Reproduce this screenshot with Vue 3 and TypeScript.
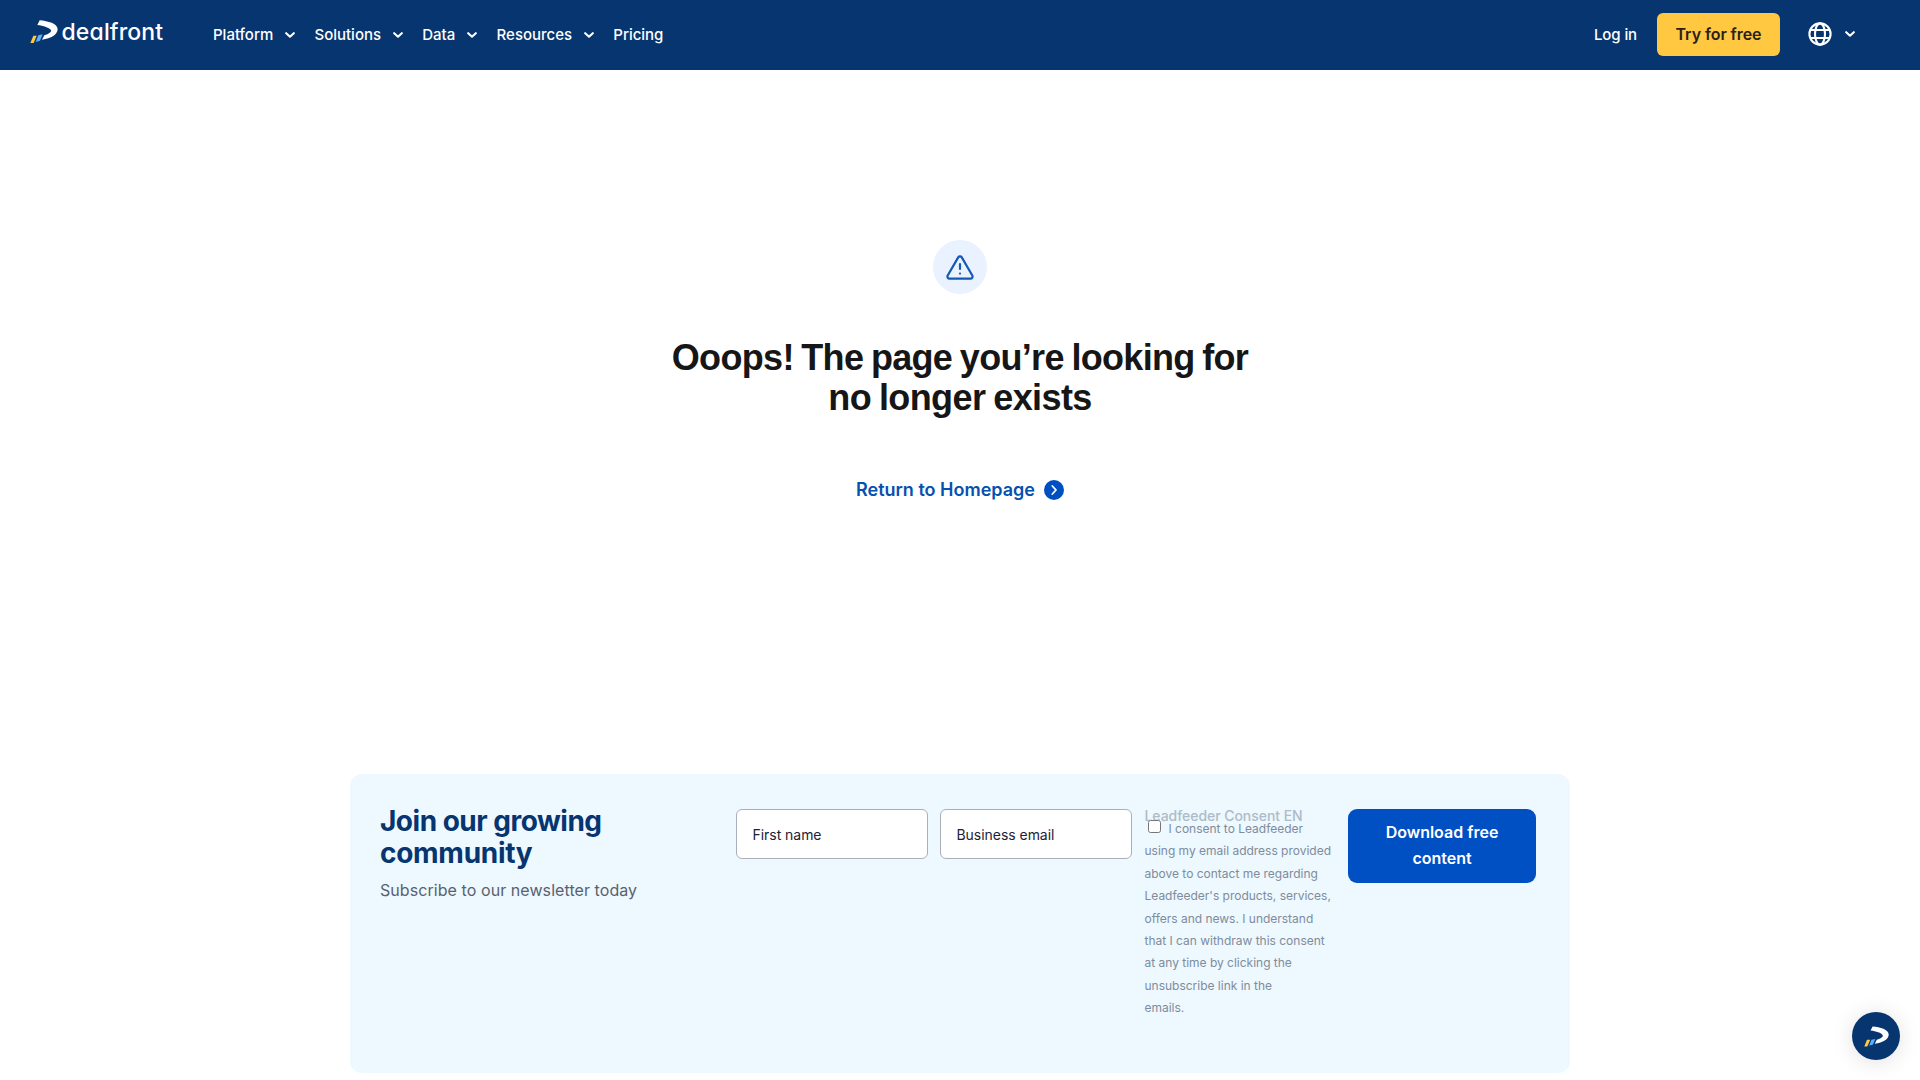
<script setup lang="ts">
interface NavItem {
  label: string
  menu: boolean
}

const navItems: NavItem[] = [
  { label: 'Platform', menu: true },
  { label: 'Solutions', menu: true },
  { label: 'Data', menu: true },
  { label: 'Resources', menu: true },
  { label: 'Pricing', menu: false },
]

const consentLines: string[] = [
  'using my email address provided',
  'above to contact me regarding',
  "Leadfeeder's products, services,",
  'offers and news. I understand',
  'that I can withdraw this consent',
  'at any time by clicking the',
  'unsubscribe link in the',
  'emails.',
]
</script>

<template>
  <div class="page">
    <header class="topbar">
      <a class="brand">
        <svg class="mark" viewBox="0 0 84 70">
          <path fill="#fff" d="M29 1C54 3 83 11 83 28C83 43 64 56 36 59L43 46C57 42 65 36 63 31C59 23 40 17 22 15Z" />
          <path fill="#ffc940" d="M10 47H20L11 69H1Z" />
          <path fill="#59b0ff" d="M25 46L38 43L30 62L17 66Z" />
        </svg>
        <span class="wordmark">dealfront</span>
      </a>
      <nav class="nav">
        <a v-for="item in navItems" :key="item.label" class="nav-item">
          <span>{{ item.label }}</span>
          <svg v-if="item.menu" class="chevron" viewBox="0 0 10 6">
            <path d="M1.2 1.2L5 4.7L8.8 1.2" />
          </svg>
        </a>
      </nav>
      <div class="actions">
        <a class="login">Log in</a>
        <button class="try">Try for free</button>
        <svg class="globe" viewBox="0 0 24 24">
          <circle cx="12" cy="12" r="10.6" />
          <ellipse cx="12" cy="12" rx="5" ry="10.6" />
          <path d="M2.4 8H21.6M2.4 16H21.6" />
        </svg>
        <svg class="chevron" viewBox="0 0 10 6">
          <path d="M1.2 1.2L5 4.7L8.8 1.2" />
        </svg>
      </div>
    </header>

    <main class="missing">
      <div class="alert">
        <svg viewBox="0 0 28 26">
          <path d="M12.2 2.4L1.7 20.4C.9 22 1.9 23.7 3.6 23.7H24.4C26.1 23.7 27.1 22 26.3 20.4L15.8 2.4C15 1.1 13 1.1 12.2 2.4Z" />
          <path d="M14 9V14" />
          <circle cx="14" cy="18.6" r="1.1" />
        </svg>
      </div>
      <h1><span class="l1">Ooops! The page you’re looking for</span><br><span class="l2">no longer exists</span></h1>
      <a class="home">
        <span>Return to Homepage</span>
        <svg viewBox="0 0 20 20">
          <circle cx="10" cy="10" r="10" />
          <path d="M8.3 6L12 10L8.3 14" />
        </svg>
      </a>
    </main>

    <section class="newsletter">
      <div class="intro">
        <h2>Join our growing<br><span>community</span></h2>
        <p>Subscribe to our newsletter today</p>
      </div>
      <form class="form" @submit.prevent>
        <input class="field" type="text" placeholder="First name">
        <input class="field" type="text" placeholder="Business email">
        <div class="consent">
          <div class="consent-title">Leadfeeder Consent EN</div>
          <label class="consent-text">
            <input type="checkbox">I consent to Leadfeeder<br>
            <template v-for="line in consentLines" :key="line">{{ line }}<br></template>
          </label>
        </div>
        <button class="download">Download free<br>content</button>
      </form>
    </section>

    <button class="chat" aria-label="Open chat">
      <svg viewBox="0 0 84 70">
        <path fill="#fff" d="M29 1C54 3 83 11 83 28C83 43 64 56 36 59L43 46C57 42 65 36 63 31C59 23 40 17 22 15Z" />
        <path fill="#ffc940" d="M10 46H21L11 69H1Z" />
        <path fill="#59b0ff" d="M25 46L38 43L30 62L17 66Z" />
      </svg>
    </button>
  </div>
</template>

<style>
body {
  margin: 0;
  overflow: hidden;
}
</style>

<style scoped>
.page {
  box-sizing: border-box;
  width: 100%;
  height: 1080px;
  background: #fff;
  color: #161616;
  font-family: Inter, "Liberation Sans", sans-serif;
  overflow: hidden;
}
button {
  border: 0;
  padding: 0;
  font-family: inherit;
}
.topbar {
  box-sizing: border-box;
  display: flex;
  align-items: center;
  height: 70px;
  padding: 0 65px 0 30px;
  background: #07356f;
  color: #fff;
}
.brand {
  display: flex;
  align-items: center;
  width: 183px;
}
.mark {
  width: 28px;
  height: 23.3px;
  margin-top: -7px;
}
.wordmark {
  margin: -6px 0 0 3.5px;
  font-size: 23px;
  font-weight: 500;
  line-height: 28px;
  letter-spacing: 0.15px;
  font-feature-settings: "cv11";
}
.nav {
  display: flex;
  gap: 19.4px;
}
.nav-item {
  display: flex;
  align-items: center;
  font-size: 15px;
  font-weight: 450;
  line-height: 20px;
  letter-spacing: -0.01px;
}
.nav-item .chevron {
  margin-left: 11.9px;
}
.chevron {
  width: 10px;
  height: 6px;
  fill: none;
  stroke: #fff;
  stroke-width: 2.1;
  stroke-linecap: round;
  stroke-linejoin: round;
}
.actions {
  display: flex;
  align-items: center;
  margin-left: auto;
}
.login {
  margin: -2px 20px 0 0;
  font-size: 15px;
  font-weight: 450;
  letter-spacing: -0.1px;
}
.try {
  width: 123px;
  height: 43px;
  margin-top: -1px;
  padding-bottom: 2px;
  border-radius: 6px;
  background: #ffc840;
  color: #2b2118;
  font-size: 16px;
  font-weight: 600;
  letter-spacing: -0.07px;
}
.globe {
  width: 24px;
  height: 24px;
  margin: -2px 13px 0 28px;
  fill: none;
  stroke: #fff;
  stroke-width: 2.1;
}
.actions .chevron {
  margin-top: -3px;
}
.missing {
  display: flex;
  flex-direction: column;
  align-items: center;
  height: 704px;
}
.alert {
  display: flex;
  align-items: center;
  justify-content: center;
  width: 54px;
  height: 54px;
  margin-top: 170px;
  border-radius: 50%;
  background: #ebf2ff;
}
.alert svg {
  width: 28px;
  height: 26px;
  margin-top: 1px;
  fill: none;
  stroke: #1259b8;
  stroke-width: 2.2;
  stroke-linecap: round;
}
.alert circle {
  fill: #1259b8;
  stroke: none;
}
h1 {
  margin: 44px 0 0;
  font: 700 36px/40px "Liberation Sans", sans-serif;
  text-align: center;
}
.l1 {
  letter-spacing: -0.68px;
  word-spacing: -1.7px;
}
.l2 {
  letter-spacing: -0.6px;
  word-spacing: -1.5px;
}
.home {
  display: flex;
  align-items: center;
  gap: 9px;
  margin-top: 59px;
  color: #0650b0;
  font-size: 18px;
  font-weight: 600;
  line-height: 26px;
}
.home svg {
  width: 20px;
  height: 20px;
  fill: #004fc0;
}
.home path {
  fill: none;
  stroke: #fff;
  stroke-width: 1.8;
  stroke-linecap: round;
  stroke-linejoin: round;
}
.newsletter {
  box-sizing: border-box;
  display: flex;
  width: 1220px;
  height: 299px;
  margin: 0 auto;
  padding: 35px 34px 0 30px;
  border-radius: 12px;
  background: #edf8ff;
}
.intro {
  width: 356px;
  margin-top: -4px;
  flex: none;
}
h2 {
  margin: 0;
  color: #07356f;
  font-size: 28px;
  font-weight: 700;
  line-height: 32px;
  letter-spacing: -0.5px;
}
h2 span {
  letter-spacing: -0.28px;
}
.intro p {
  margin: 9px 0 0;
  color: #58626e;
  font-size: 16px;
  line-height: 24px;
  letter-spacing: 0.07px;
}
.form {
  display: flex;
  align-items: flex-start;
  gap: 12px;
}
.field {
  box-sizing: border-box;
  width: 192px;
  height: 50px;
  padding: 1px 15.5px;
  border: 1px solid #a9afbb;
  border-radius: 6px;
  background: #fff;
  font: 400 14px Inter, sans-serif;
  letter-spacing: -0.04px;
}
.field::placeholder {
  color: #1c2237;
  opacity: 1;
}
.consent {
  width: 192px;
}
.consent-title {
  height: 9px;
  margin-left: 0.5px;
  color: #aebbc8;
  font-size: 14px;
  font-weight: 500;
  line-height: 14px;
  letter-spacing: -0.05px;
  white-space: nowrap;
}
.consent-text {
  display: block;
  margin: 0 0 0 0.5px;
  color: #7f8c9b;
  font-size: 12px;
  line-height: 22.4px;
  letter-spacing: -0.01px;
  white-space: nowrap;
}
.consent-text input {
  width: 13px;
  height: 13px;
  margin: 0 8px 0 3px;
  vertical-align: 0;
}
.download {
  width: 188px;
  height: 74px;
  padding-bottom: 2px;
  border-radius: 9px;
  background: #004fc3;
  color: #fff;
  font-size: 16px;
  font-weight: 600;
  line-height: 26px;
}
.chat {
  position: fixed;
  right: 20px;
  bottom: 20px;
  display: flex;
  align-items: center;
  justify-content: center;
  width: 48px;
  height: 48px;
  border-radius: 50%;
  background: #07356f;
  box-shadow: 0 2px 22px rgba(0, 0, 0, 0.12);
}
.chat svg {
  width: 25px;
  height: 21px;
}
</style>
